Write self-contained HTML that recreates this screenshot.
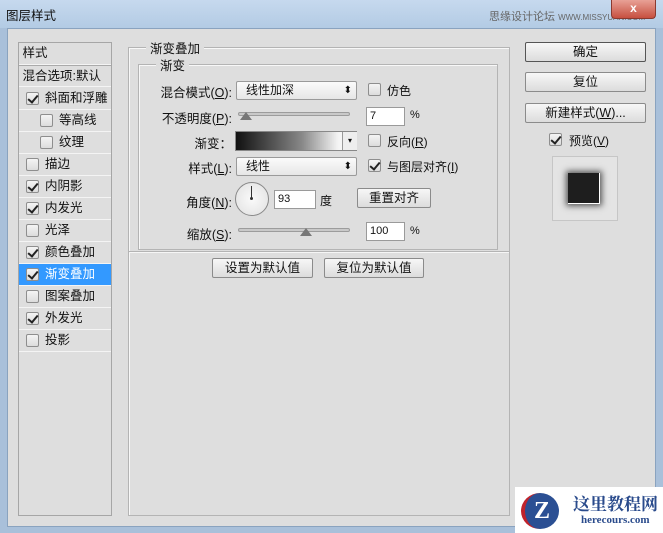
<!DOCTYPE html><html><head><meta charset="utf-8"><style>
*{box-sizing:border-box;margin:0;padding:0}
body{width:663px;height:533px;overflow:hidden;background:#a9c0da;font-family:"Liberation Sans","Noto Sans CJK SC",sans-serif;font-size:12px;color:#111;position:relative}
.a{position:absolute}
.title{left:0;top:0;width:663px;height:28px;background:linear-gradient(#c6d9ee,#b3cbe4);}
.win{left:7px;top:28px;width:649px;height:499px;background:#dedede;border:1px solid #8aa3bf}
.lb{left:18px;top:42px;width:94px;height:474px;border:1px solid #a6a6a6;background:#dedede}
.row{position:absolute;left:0;width:92px;height:22px;border-bottom:1px solid #f4f4f4;line-height:21px;font-size:12.5px}
.cb{position:absolute;width:13px;height:13px;border:1px solid #8e8e8e;background:linear-gradient(#f4f4f4,#dcdcdc);border-radius:2px}
.cb.c::after{content:"";position:absolute;left:3px;top:0px;width:4px;height:8px;border:solid #222;border-width:0 2px 2px 0;transform:rotate(40deg)}
.gb{border:1px solid #b4b4b4;box-shadow:1px 1px 0 #f8f8f8 inset}
.lg{background:#dedede;padding:0 4px;font-size:12.5px}
.sel{height:19px;border:1px solid #9a9a9a;border-radius:2px;background:linear-gradient(#fbfbfb,#e6e6e6);padding-left:9px;line-height:17px}
.sel::after{content:"⬍";position:absolute;right:4px;top:0;font-size:10px}
.inp{height:19px;border:1px solid #9a9a9a;background:#fff;padding-left:3px;line-height:17px;font-size:11px}
.btn{height:20px;border:1px solid #8b8b8b;border-radius:2px;background:linear-gradient(#f7f7f7,#dcdcdc);text-align:center;line-height:18px;font-size:12.5px}
.sl{height:4px;border:1px solid #9c9c9c;border-radius:2px;background:#c9c9c9}
.th{width:0;height:0;border-left:6px solid transparent;border-right:6px solid transparent;border-bottom:8px solid #777}
.lab{text-align:right;font-size:12.5px}
</style></head><body>
<div class="a title"></div>
<div class="a" style="left:6px;top:5px;font-size:12.5px">图层样式</div>
<div class="a" style="left:489px;top:8px;font-size:11px;color:#666">思缘设计论坛 <span style="font-size:8px">WWW.MISSYUAN.COM</span></div>
<div class="a" style="left:611px;top:0;width:45px;height:19px;background:linear-gradient(#e8a196,#c75040);border:1px solid #8a3a30;border-top:0;border-radius:0 0 4px 4px;color:#fff;text-align:center;font-weight:bold;line-height:16px">x</div>
<div class="a win"></div>
<div class="a lb">
<div class="row" style="top:0">&nbsp;样式</div>
<div class="row" style="top:22px;border-top:1px solid #aaa">&nbsp;混合选项:默认</div>
<div class="row" style="top:45px"><span class="cb c" style="left:7px;top:4px"></span><span style="position:absolute;left:26px">斜面和浮雕</span></div>
<div class="row" style="top:67px"><span class="cb" style="left:21px;top:4px"></span><span style="position:absolute;left:40px">等高线</span></div>
<div class="row" style="top:89px"><span class="cb" style="left:21px;top:4px"></span><span style="position:absolute;left:40px">纹理</span></div>
<div class="row" style="top:111px"><span class="cb" style="left:7px;top:4px"></span><span style="position:absolute;left:26px">描边</span></div>
<div class="row" style="top:133px"><span class="cb c" style="left:7px;top:4px"></span><span style="position:absolute;left:26px">内阴影</span></div>
<div class="row" style="top:155px"><span class="cb c" style="left:7px;top:4px"></span><span style="position:absolute;left:26px">内发光</span></div>
<div class="row" style="top:177px"><span class="cb" style="left:7px;top:4px"></span><span style="position:absolute;left:26px">光泽</span></div>
<div class="row" style="top:199px"><span class="cb c" style="left:7px;top:4px"></span><span style="position:absolute;left:26px">颜色叠加</span></div>
<div class="row" style="top:221px;background:#3399ff;color:#fff"><span class="cb c" style="left:7px;top:4px"></span><span style="position:absolute;left:26px">渐变叠加</span></div>
<div class="row" style="top:243px"><span class="cb" style="left:7px;top:4px"></span><span style="position:absolute;left:26px">图案叠加</span></div>
<div class="row" style="top:265px"><span class="cb c" style="left:7px;top:4px"></span><span style="position:absolute;left:26px">外发光</span></div>
<div class="row" style="top:287px"><span class="cb" style="left:7px;top:4px"></span><span style="position:absolute;left:26px">投影</span></div>
</div>
<div class="a gb" style="left:128px;top:47px;width:382px;height:469px"></div>
<div class="a lg" style="left:146px;top:38px">渐变叠加</div>
<div class="a gb" style="left:138px;top:64px;width:360px;height:186px"></div>
<div class="a lg" style="left:156px;top:55px">渐变</div>
<div class="a" style="left:129px;top:251px;width:380px;border-top:1px solid #b4b4b4;border-bottom:1px solid #f6f6f6"></div>
<div class="a lab" style="left:140px;top:82px;width:92px">混合模式(<u>O</u>):</div>
<div class="a sel" style="left:236px;top:81px;width:121px">线性加深</div>
<div class="a cb" style="left:368px;top:83px"></div><div class="a" style="left:387px;top:82px">仿色</div>
<div class="a lab" style="left:140px;top:108px;width:92px">不透明度(<u>P</u>):</div>
<div class="a sl" style="left:238px;top:112px;width:112px"></div><div class="a th" style="left:240px;top:112px"></div>
<div class="a inp" style="left:366px;top:107px;width:39px">7</div><div class="a" style="left:410px;top:109px;font-size:11px">%</div>
<div class="a lab" style="left:140px;top:133px;width:92px">渐变：</div>
<div class="a" style="left:235px;top:131px;width:122px;height:20px;border:1px solid #888;background:linear-gradient(90deg,#111,#888 55%,#f4f4f4 85%,#fff)"></div>
<div class="a" style="left:342px;top:132px;width:15px;height:18px;background:#eee;border-left:1px solid #999;font-size:8px;text-align:center;line-height:18px">▾</div>
<div class="a cb" style="left:368px;top:134px"></div><div class="a" style="left:387px;top:133px">反向(<u>R</u>)</div>
<div class="a lab" style="left:140px;top:158px;width:92px">样式(<u>L</u>):</div>
<div class="a sel" style="left:236px;top:157px;width:121px">线性</div>
<div class="a cb c" style="left:368px;top:159px"></div><div class="a" style="left:387px;top:158px">与图层对齐(<u>I</u>)</div>
<div class="a lab" style="left:140px;top:192px;width:92px">角度(<u>N</u>):</div>
<div class="a" style="left:235px;top:182px;width:34px;height:34px;border-radius:50%;border:1px solid #888;background:radial-gradient(#fafafa,#e0e0e0)"></div>
<div class="a" style="left:251px;top:186px;width:1px;height:13px;background:#333"></div>
<div class="a" style="left:250px;top:197px;width:3px;height:3px;background:#333;border-radius:50%"></div>
<div class="a inp" style="left:274px;top:190px;width:42px">93</div><div class="a" style="left:320px;top:192px">度</div>
<div class="a btn" style="left:357px;top:188px;width:74px">重置对齐</div>
<div class="a lab" style="left:140px;top:224px;width:92px">缩放(<u>S</u>):</div>
<div class="a sl" style="left:238px;top:228px;width:112px"></div><div class="a th" style="left:300px;top:228px"></div>
<div class="a inp" style="left:366px;top:222px;width:39px">100</div><div class="a" style="left:410px;top:225px;font-size:11px">%</div>
<div class="a btn" style="left:212px;top:258px;width:101px">设置为默认值</div>
<div class="a btn" style="left:324px;top:258px;width:100px">复位为默认值</div>
<div class="a btn" style="left:525px;top:42px;width:121px;border-color:#555">确定</div>
<div class="a btn" style="left:525px;top:72px;width:121px">复位</div>
<div class="a btn" style="left:525px;top:103px;width:121px">新建样式(<u>W</u>)...</div>
<div class="a cb c" style="left:549px;top:133px"></div><div class="a" style="left:569px;top:132px">预览(<u>V</u>)</div>
<div class="a" style="left:552px;top:156px;width:66px;height:65px;border:1px solid #c6c6c6;background:#e4e4e4"></div>
<div class="a" style="left:568px;top:173px;width:32px;height:31px;background:#1e1e1e;box-shadow:0 0 6px 2px #555;border-right:1px solid #fff;border-bottom:1px solid #fff"></div>
<div class="a" style="left:515px;top:487px;width:148px;height:46px;background:#fff"></div>
<div class="a" style="left:521px;top:493px;width:38px;height:36px;border-radius:50%;background:#2b4f93;color:#fff;font-weight:bold;font-size:24px;text-align:center;line-height:36px;font-family:'Liberation Serif',serif;border-left:4px solid #c0232c">Z</div>
<div class="a" style="left:573px;top:490px;font-size:17px;font-weight:bold;color:#2a4b8c;font-family:'Liberation Serif','Noto Serif CJK SC',serif">这里教程网</div>
<div class="a" style="left:581px;top:514px;font-size:11px;font-weight:bold;color:#2a4b8c;font-family:'Liberation Serif',serif">herecours.com</div>
</body></html>
